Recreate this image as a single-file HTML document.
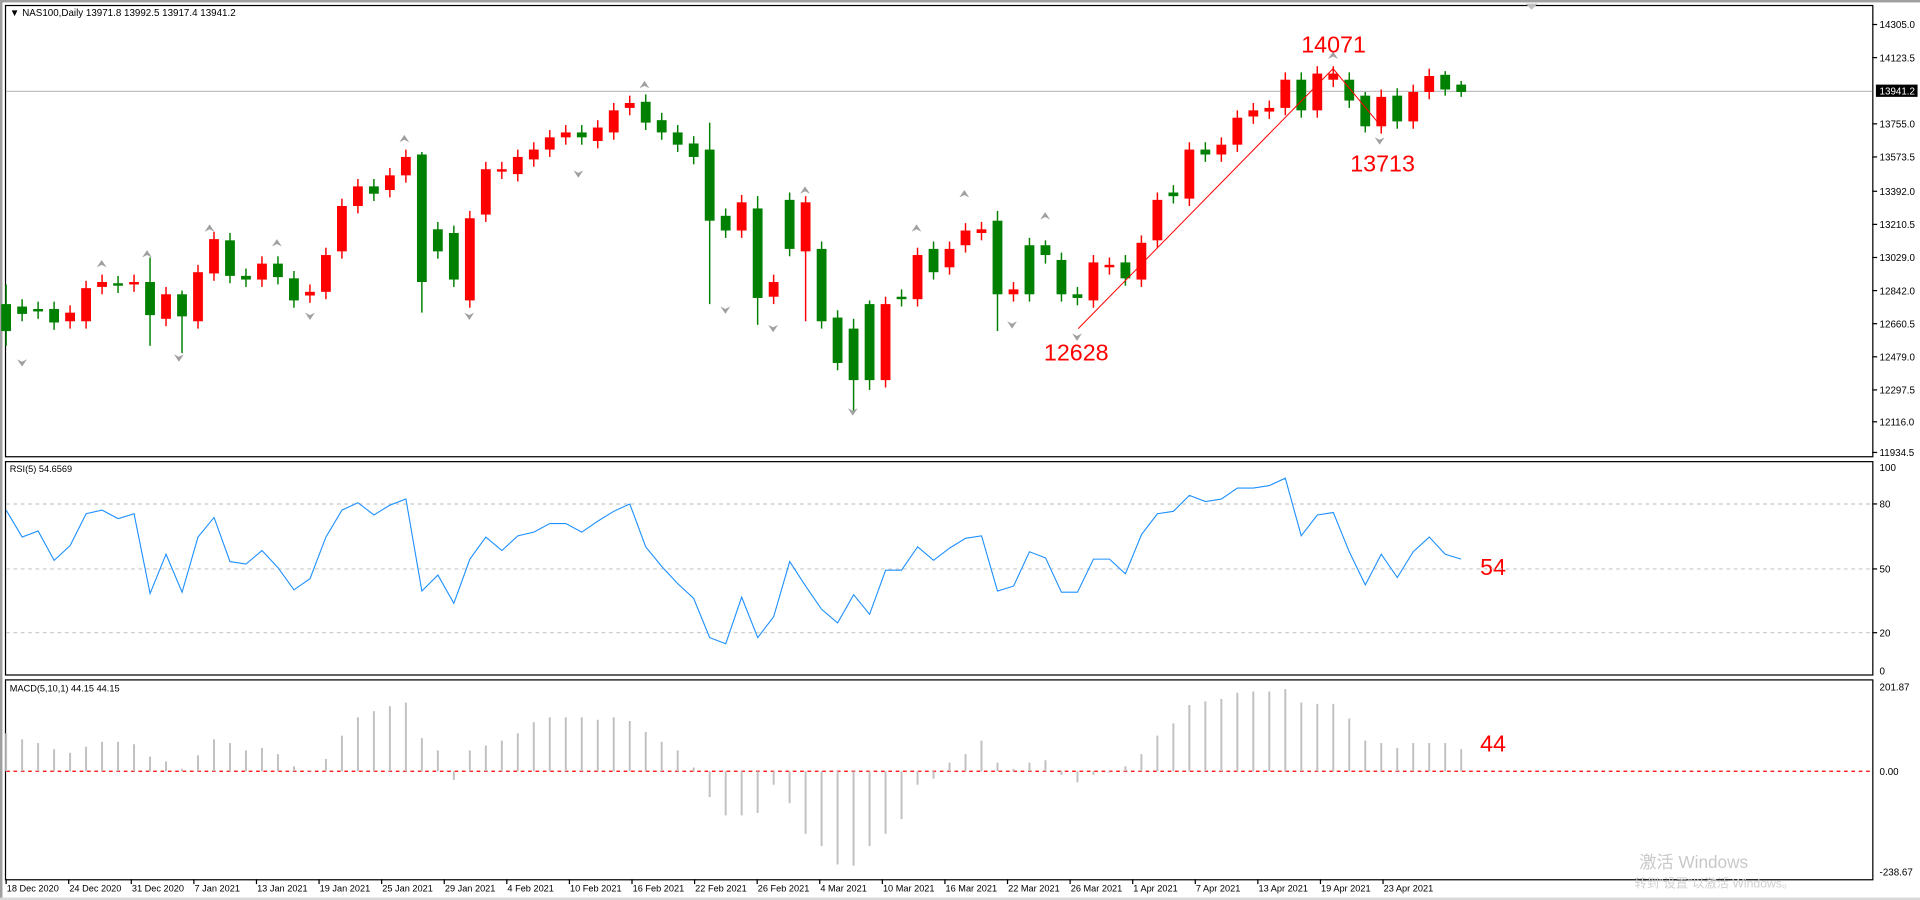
<!DOCTYPE html>
<html><head><meta charset="utf-8">
<style>
html,body{margin:0;padding:0;background:#fff;overflow:hidden}
svg{display:block}
text{font-family:"Liberation Sans","Noto Sans CJK SC",sans-serif}
</style></head>
<body>
<svg id="s" width="1920" height="900" viewBox="0 0 1567 734" preserveAspectRatio="none" xmlns="http://www.w3.org/2000/svg">
<rect x="0" y="0" width="1567" height="734" fill="#fff"/>
<rect x="0" y="0" width="1567" height="2" fill="#a0a0a0"/>
<rect x="0" y="0" width="2" height="734" fill="#a0a0a0"/>
<rect x="0" y="732" width="1567" height="2" fill="#d8d8d8"/>
<g id="g"></g>
</svg>
<script>
const g=document.getElementById('g');let h='';
h+='<rect x="4.5" y="4.5" width="1524" height="368" fill="none" stroke="#000" stroke-width="1"/>';
h+='<rect x="4.5" y="376.5" width="1524" height="174" fill="none" stroke="#000" stroke-width="1"/>';
h+='<rect x="4.5" y="554.5" width="1524" height="163" fill="none" stroke="#000" stroke-width="1"/>';
const pl=[[14305.0,20],[14123.5,47],[13755.0,101],[13573.5,128],[13392.0,156],[13210.5,183],[13029.0,210],[12842.0,237],[12660.5,264],[12479.0,291],[12297.5,318],[12116.0,344],[11934.5,369]];
pl.forEach(p=>{h+=`<line x1="1528" x2="1532" y1="${p[1]}" y2="${p[1]}" stroke="#000"/><text x="1534" y="${p[1]+3}" font-size="8" fill="#000">${p[0].toFixed(1)}</text>`;});
h+='<line x1="5" x2="1528" y1="74.5" y2="74.5" stroke="#c0c0c0"/>';
h+='<rect x="1531" y="69" width="34" height="10" fill="#000"/><text x="1534" y="77" font-size="8" fill="#fff">13941.2</text>';
h+='<path d="M1245 3 L1255 3 L1250 8 Z" fill="#c0c0c0"/>';
const c=[[248,270,'g'],[250,256,'g'],[252,254,'g'],[252,263,'g'],[262,255,'r'],[262,235,'r'],[234,230,'r'],[231,233,'g'],[232,230,'r'],[230,257,'g'],[260,240,'r'],[240,258,'g'],[262,222,'r'],[223,195,'r'],[196,225,'g'],[225,228,'g'],[228,215,'r'],[215,226,'g'],[227,245,'g'],[241,238,'r'],[238,208,'r'],[205,168,'r'],[168,152,'r'],[152,158,'g'],[155,143,'r'],[143,128,'r'],[126,230,'g'],[187,205,'g'],[190,228,'g'],[245,178,'r'],[175,138,'r'],[140,138,'r'],[142,128,'r'],[130,122,'r'],[122,112,'r'],[112,108,'r'],[108,112,'g'],[115,104,'r'],[108,90,'r'],[88,84,'r'],[83,100,'g'],[98,108,'g'],[108,118,'g'],[117,128,'g'],[122,180,'g'],[176,188,'g'],[188,165,'r'],[170,243,'g'],[242,230,'r'],[163,203,'g'],[205,165,'r'],[203,262,'g'],[259,296,'g'],[268,310,'g'],[248,310,'g'],[310,248,'r'],[242,244,'g'],[244,208,'r'],[203,222,'g'],[218,203,'r'],[200,188,'r'],[190,187,'r'],[180,240,'g'],[240,236,'r'],[200,240,'g'],[200,208,'g'],[212,240,'g'],[240,243,'g'],[245,214,'r'],[218,216,'r'],[214,227,'g'],[228,198,'r'],[196,163,'r'],[157,160,'g'],[162,122,'r'],[122,126,'g'],[126,118,'r'],[118,96,'r'],[95,90,'r'],[91,88,'r'],[88,65,'r'],[65,90,'g'],[90,60,'r'],[65,60,'r'],[65,82,'g'],[78,103,'g'],[103,79,'r'],[78,99,'g'],[99,75,'r'],[75,62,'r'],[61,73,'g'],[69,75,'g']];
const wk={9:[210,282],11:[237,288],0:[232,282],26:[124,255],44:[100,248],47:[160,265],50:[160,262],53:[260,335],54:[245,318],62:[172,270],85:[75,108],90:[58,78],91:[66,79],65:[196,215]};
const X=i=>5+13.05*i;
c.forEach((d,i)=>{const x=X(i);const col=d[2]=='r'?'#ff0000':'#008000';let t=Math.min(d[0],d[1]),b=Math.max(d[0],d[1]);let w=wk[i]||[t-6,b+6];
h+=`<line x1="${x}" x2="${x}" y1="${w[0]}" y2="${w[1]}" stroke="${col}" stroke-width="1.2"/>`;
h+=`<rect x="${x-4}" y="${t}" width="8" height="${Math.max(b-t,1.5)}" fill="${col}"/>`;});
[[18,296,1],[83,215,0],[120,207,0],[146,292,1],[171,186,0],[226,198,0],[253,258,1],[330,113,0],[383,258,1],[472,142,1],[526,69,0],[592,253,1],[631,268,1],[657,155,0],[696,336,1],[748,186,0],[787,158,0],[826,265,1],[853,176,0],[879,275,1],[1088,45,0],[1126,115,1]].forEach(f=>{const [x,y,d]=f;h+=d?`<path d="M${x-4} ${y-3} L${x} ${y+3} L${x+4} ${y-3} L${x} ${y-1} Z" fill="#a0a0a0"/>`:`<path d="M${x-4} ${y+3} L${x} ${y-3} L${x+4} ${y+3} L${x} ${y+1} Z" fill="#a0a0a0"/>`;});
h+='<polyline points="880,268 1088,56 1128,104" fill="none" stroke="#ff0000" stroke-width="0.8"/>';
h+='<text x="8" y="13" font-size="8" fill="#000">▼ NAS100,Daily  13971.8 13992.5 13917.4 13941.2</text>';
h+='<text x="1062" y="43" font-size="19" fill="#ff0000">14071</text>';
h+='<text x="1102" y="140" font-size="19" fill="#ff0000">13713</text>';
h+='<text x="852" y="294" font-size="19" fill="#ff0000">12628</text>';
h+='<text x="1208" y="469" font-size="19" fill="#ff0000">54</text>';
h+='<text x="1208" y="613" font-size="19" fill="#ff0000">44</text>';
[[80,411],[50,464],[20,516]].forEach(l=>{h+=`<line x1="5" x2="1528" y1="${l[1]}" y2="${l[1]}" stroke="#c8c8c8" stroke-dasharray="3,3"/><line x1="1528" x2="1532" y1="${l[1]}" y2="${l[1]}" stroke="#000"/><text x="1534" y="${l[1]+3}" font-size="8">${l[0]}</text>`;});
h+='<text x="1534" y="384" font-size="8">100</text><text x="1534" y="550" font-size="8">0</text>';
h+='<text x="8" y="385" font-size="7.5">RSI(5) 54.6569</text>';
const r=[416,438,433,457,445,419,416,423,419,484,452,483,438,422,458,460,449,463,481,472,438,416,410,420,412,407,482,469,492,456,438,449,437,434,427,427,434,425,417,411,446,462,476,488,520,525,487,520,503,458,478,497,508,485,501,465,465,446,457,447,439,437,482,478,450,455,483,483,456,456,468,436,419,417,404,409,407,398,398,396,390,437,420,418,450,477,452,471,450,438,452,456];
h+='<polyline fill="none" stroke="#1e90ff" stroke-width="0.9" points="'+r.map((y,i)=>X(i).toFixed(1)+','+y).join(' ')+'"/>';
h+='<line x1="5" x2="1528" y1="629" y2="629" stroke="#ff0000" stroke-dasharray="3,3"/>';
h+='<text x="1534" y="563" font-size="8">201.87</text><text x="1534" y="632" font-size="8">0.00</text><text x="1534" y="714" font-size="8">-238.67</text>';
h+='<text x="8" y="564" font-size="7.5">MACD(5,10,1) 44.15 44.15</text>';
const m=[598,603,606,611,614,609,605,605,607,617,621,627,616,603,606,612,610,615,625,628,619,600,585,580,576,573,602,612,636,612,608,604,598,589,585,585,585,587,585,588,597,605,612,626,650,665,665,663,640,655,680,690,705,706,690,680,668,640,635,622,615,604,622,627,622,620,632,638,632,630,625,615,600,590,575,572,570,565,564,564,562,573,574,574,586,604,606,610,606,606,606,611];
m.forEach((y,i)=>{const x=X(i);h+=`<rect x="${x-0.8}" y="${Math.min(y,629)}" width="1.6" height="${Math.max(Math.abs(y-629),1)}" fill="#c0c0c0"/>`;});
const ds=['18 Dec 2020','24 Dec 2020','31 Dec 2020','7 Jan 2021','13 Jan 2021','19 Jan 2021','25 Jan 2021','29 Jan 2021','4 Feb 2021','10 Feb 2021','16 Feb 2021','22 Feb 2021','26 Feb 2021','4 Mar 2021','10 Mar 2021','16 Mar 2021','22 Mar 2021','26 Mar 2021','1 Apr 2021','7 Apr 2021','13 Apr 2021','19 Apr 2021','23 Apr 2021'];
ds.forEach((d,i)=>{const x=5+51.08*i;h+=`<line x1="${x}" x2="${x}" y1="717" y2="721" stroke="#000"/><text x="${x+0.5}" y="727" font-size="7.5">${d}</text>`;});
h+='<text x="1338" y="708" font-size="14" fill="#c8c8c8">激活 Windows</text>';
h+='<text x="1334" y="724" font-size="10" fill="#d0d0d0">转到"设置"以激活 Windows。</text>';
g.innerHTML=h;
</script>
</body></html>
